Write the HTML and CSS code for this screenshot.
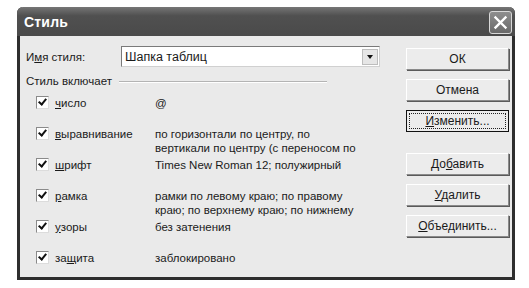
FILE: index.html
```html
<!DOCTYPE html>
<html lang="ru">
<head>
    <meta charset="UTF-8">
    <title>Стиль</title>
    <link rel="stylesheet" href="styles.css">
</head>
<body>
    <div class="dialog">
        <div class="title-bar">
            <span class="title">Стиль</span>
            <span class="close-btn">
                <svg width="15" height="15" viewBox="0 0 15 15">
                    <path d="M2.5 2.5 L12.5 12.5 M12.5 2.5 L2.5 12.5" stroke="#fff" stroke-width="2.4" stroke-linecap="square"/>
                </svg>
            </span>
        </div>

        <div class="dialog-body">
            <div class="main-col">
                <div class="name-row">
                    <span class="name-label">И<u>м</u>я стиля:</span>
                    <div class="select">
                        <span class="select-text">Шапка таблиц</span>
                        <span class="select-arrow"></span>
                    </div>
                </div>

                <div class="group-title">
                    <span>Стиль включает</span>
                    <span class="group-line"></span>
                </div>

                <div class="items">
                    <div class="item">
                        <span class="checkbox"></span>
                        <span class="item-label"><u>ч</u>исло</span>
                        <span class="item-value">@</span>
                    </div>
                    <div class="item">
                        <span class="checkbox"></span>
                        <span class="item-label"><u>в</u>ыравнивание</span>
                        <span class="item-value">по горизонтали по центру, по<br>вертикали по центру (с переносом по</span>
                    </div>
                    <div class="item">
                        <span class="checkbox"></span>
                        <span class="item-label"><u>ш</u>рифт</span>
                        <span class="item-value">Times New Roman 12; полужирный</span>
                    </div>
                    <div class="item">
                        <span class="checkbox"></span>
                        <span class="item-label"><u>р</u>амка</span>
                        <span class="item-value">рамки по левому краю; по правому<br>краю; по верхнему краю; по нижнему</span>
                    </div>
                    <div class="item">
                        <span class="checkbox"></span>
                        <span class="item-label"><u>у</u>зоры</span>
                        <span class="item-value">без затенения</span>
                    </div>
                    <div class="item">
                        <span class="checkbox"></span>
                        <span class="item-label">за<u>щ</u>ита</span>
                        <span class="item-value">заблокировано</span>
                    </div>
                </div>
            </div>

            <div class="buttons">
                <button class="btn">ОК</button>
                <button class="btn">Отмена</button>
                <button class="btn btn-focus"><span class="focus-ring"><u>И</u>зменить...</span></button>
                <button class="btn btn-gap">До<u>б</u>авить</button>
                <button class="btn"><u>У</u>далить</button>
                <button class="btn"><u>О</u>бъединить...</button>
            </div>
        </div>
    </div>
</body>
</html>
```

FILE: styles.css
```css
body {
    margin: 0;
    background-color: #ffffff;
    font-family: 'Liberation Sans', Arial, sans-serif;
    font-size: 11.5px;
    color: #1a1a1a;
}

.dialog {
    margin: 7px 0 0 17px;
    width: 498px;
    height: 273px;
    box-sizing: border-box;
    background-color: #eaeaea;
    border: 3px solid #2e2e2e;
    border-top: none;
    border-radius: 6px 6px 0 0;
    display: flex;
    flex-direction: column;
}

.title-bar {
    height: 29px;
    margin: 0 -3px;
    padding: 0 3px 0 7px;
    background: linear-gradient(#767676, #505050 30%, #4a4a4a);
    border-radius: 6px 6px 0 0;
    display: flex;
    align-items: center;
    justify-content: space-between;
}

.title {
    color: #ffffff;
    font-weight: bold;
    font-size: 14px;
    letter-spacing: 0.2px;
}

.close-btn {
    width: 21px;
    height: 21px;
    border: 1px solid #d8d8d8;
    border-radius: 3px;
    background: linear-gradient(#8e8e8e, #6a6a6a);
    display: flex;
    align-items: center;
    justify-content: center;
    margin-top: 1px;
}

.dialog-body {
    flex: 1;
    display: flex;
    padding: 10px 5px 0 6px;
}

.main-col {
    width: 360px;
}

.name-row {
    display: flex;
    align-items: center;
    height: 21px;
}

.name-label {
    width: 95px;
}

.select {
    width: 259px;
    height: 21px;
    box-sizing: border-box;
    background: #ffffff;
    border: 1px solid #7a7a7a;
    border-right-color: #d0d0d0;
    border-bottom-color: #d0d0d0;
    display: flex;
    align-items: center;
    justify-content: space-between;
    padding: 0 1px 0 3px;
}

.select-text {
    font-size: 12.5px;
}

.select-arrow {
    width: 16px;
    height: 16px;
    box-sizing: border-box;
    background: #e6e6e6;
    border: 1px solid #bdbdbd;
    position: relative;
}

.select-arrow::after {
    content: '';
    position: absolute;
    left: 4px;
    top: 5px;
    border-left: 3.5px solid transparent;
    border-right: 3.5px solid transparent;
    border-top: 4px solid #111;
}

.group-title {
    display: flex;
    align-items: center;
    margin-top: 7px;
    height: 14px;
}

.group-line {
    width: 208px;
    height: 1px;
    background: #b4b4b4;
    margin-left: 7px;
    box-shadow: 0 1px 0 #ffffff;
}

.items {
    margin-top: 1px;
}

.item {
    display: flex;
    align-items: flex-start;
    height: 31px;
    padding-top: 7px;
    box-sizing: border-box;
    line-height: 14px;
}

.checkbox {
    width: 13px;
    height: 13px;
    box-sizing: border-box;
    margin: 0 6px 0 10px;
    background: #ffffff;
    border: 1px solid #8a8a8a;
    border-right-color: #dcdcdc;
    border-bottom-color: #dcdcdc;
    position: relative;
}

.checkbox::after {
    content: '';
    position: absolute;
    left: 3px;
    top: 0px;
    width: 3px;
    height: 6px;
    border: solid #111;
    border-width: 0 2px 2px 0;
    transform: rotate(40deg);
}

.item-label {
    width: 100px;
}

.item-value {
    white-space: nowrap;
}

.buttons {
    margin-left: 26px;
    display: flex;
    flex-direction: column;
    gap: 9px;
    padding-top: 2px;
}

.btn {
    width: 103px;
    height: 22px;
    box-sizing: border-box;
    font-family: 'Liberation Sans', Arial, sans-serif;
    font-size: 12px;
    color: #1a1a1a;
    background: #ececec;
    border: 1px solid #ffffff;
    border-right-color: #8a8a8a;
    border-bottom-color: #8a8a8a;
    box-shadow: 1px 1px 0 #5a5a5a;
    padding: 0;
}

.btn-focus {
    border: 1px solid #111;
    box-shadow: none;
    padding: 2px;
}

.focus-ring {
    display: block;
    height: 100%;
    box-sizing: border-box;
    border: 1px dotted #222;
    line-height: 14px;
}

.btn-gap {
    margin-top: 12px;
}
```
